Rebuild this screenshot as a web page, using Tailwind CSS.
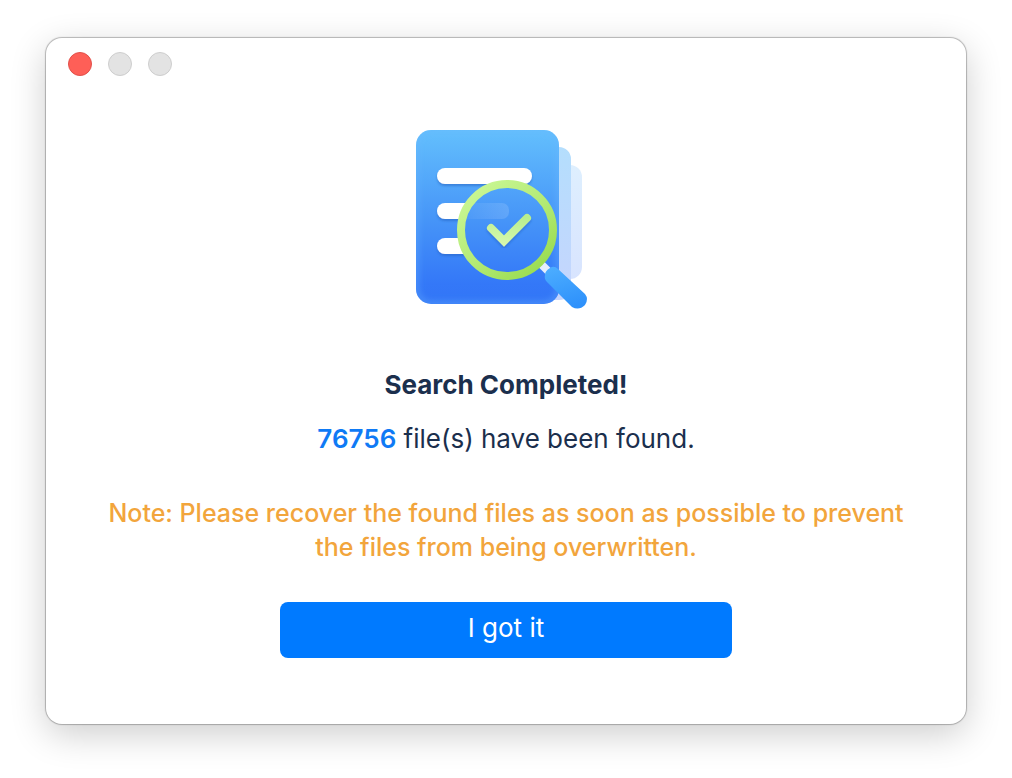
<!DOCTYPE html>
<html lang="en">
<head>
  <meta charset="UTF-8" />
  <meta name="viewport" content="width=device-width, initial-scale=1.0"/>
  <title>Search Completed</title>
  <script src="https://cdn.jsdelivr.net/npm/@tailwindcss/browser@4"></script>
</head>
<body class="bg-white px-[46px] pt-[38px] pb-[54px] font-['Inter',sans-serif] text-[26px] leading-[34px] text-[#1b2f4d]">
  <main class="rounded-2xl bg-white pb-[66px] shadow-[0_0_1px_1px_rgba(0,0,0,0.26),0_10px_36px_rgba(0,0,0,0.2)]">
    <!-- window buttons -->
    <div class="flex gap-4 px-[22px] pt-[14px]">
      <button type="button" aria-label="Close" class="size-6 rounded-full border border-[#e2504a] bg-[#fe5f57]"></button>
      <button type="button" aria-label="Minimize" disabled class="size-6 rounded-full border border-[#cecece] bg-[#e3e3e3]"></button>
      <button type="button" aria-label="Zoom" disabled class="size-6 rounded-full border border-[#cecece] bg-[#e3e3e3]"></button>
    </div>

    <div class="flex flex-col items-center px-12 pt-[39px] text-center">
      <svg class="h-[205px] w-[212px]" viewBox="0 0 212 205" fill="none" aria-hidden="true">
        <defs>
          <linearGradient id="page" x1="0" y1="15" x2="0" y2="189" gradientUnits="userSpaceOnUse">
            <stop offset="0" stop-color="#63bffd"/>
            <stop offset="0.5" stop-color="#4796f8"/>
            <stop offset="0.88" stop-color="#3478f8"/>
            <stop offset="1" stop-color="#3275f6"/>
          </linearGradient>
          <linearGradient id="back" x1="0" y1="32" x2="0" y2="184" gradientUnits="userSpaceOnUse">
            <stop offset="0" stop-color="#b4defd"/>
            <stop offset="1" stop-color="#c6d5fd"/>
          </linearGradient>
          <linearGradient id="rear" x1="0" y1="50" x2="0" y2="164" gradientUnits="userSpaceOnUse">
            <stop offset="0" stop-color="#deeffe"/>
            <stop offset="1" stop-color="#d8e4fe"/>
          </linearGradient>
          <linearGradient id="ring" x1="75" y1="75" x2="145" y2="155" gradientUnits="userSpaceOnUse">
            <stop offset="0" stop-color="#c8f692"/>
            <stop offset="0.5" stop-color="#b4eb76"/>
            <stop offset="1" stop-color="#99dc4f"/>
          </linearGradient>
          <linearGradient id="tick" x1="110" y1="100" x2="105" y2="130" gradientUnits="userSpaceOnUse">
            <stop offset="0" stop-color="#b8ee8e"/>
            <stop offset="1" stop-color="#d7f9ad"/>
          </linearGradient>
          <linearGradient id="handle" x1="160" y1="150" x2="172" y2="192" gradientUnits="userSpaceOnUse">
            <stop offset="0" stop-color="#4cadff"/>
            <stop offset="1" stop-color="#2e91fb"/>
          </linearGradient>
          <linearGradient id="ghost" x1="64" y1="0" x2="109" y2="0" gradientUnits="userSpaceOnUse">
            <stop offset="0" stop-color="#fff" stop-opacity="0.03"/>
            <stop offset="1" stop-color="#fff" stop-opacity="0.14"/>
          </linearGradient>
          <filter id="soft" x="-20%" y="-20%" width="140%" height="150%">
            <feDropShadow dx="0" dy="2" stdDeviation="1" flood-color="#1f5bbb" flood-opacity="0.5"/>
          </filter>
          <filter id="edge" x="-20%" y="-20%" width="140%" height="140%">
            <feGaussianBlur stdDeviation="3"/>
          </filter>
          <clipPath id="sheet"><rect x="16" y="15" width="143" height="174" rx="15"/></clipPath>
        </defs>
        <!-- stacked pages -->
        <path d="M150 50h20a12 12 0 0 1 12 12v90a12 12 0 0 1-12 12h-20z" fill="url(#rear)"/>
        <path d="M145 32h14a12 12 0 0 1 12 12v128a12 12 0 0 1-12 13h-14z" fill="url(#back)"/>
        <rect x="16" y="15" width="143" height="174" rx="15" fill="url(#page)"/>
        <g clip-path="url(#sheet)">
          <rect x="16" y="15" width="143" height="174" rx="15" stroke="#6db8ff" stroke-opacity="0.45" stroke-width="5" filter="url(#edge)"/>
        </g>
        <!-- text lines -->
        <g fill="#fff" filter="url(#soft)">
          <rect x="37" y="53" width="95" height="16" rx="8"/>
          <path d="M45 88h21l-6 16H45a8 8 0 0 1 0-16z"/>
          <path d="M45 123h15l6 16H45a8 8 0 0 1 0-16z"/>
        </g>
        <!-- magnifier -->
        <circle cx="107" cy="115" r="46" fill="url(#page)"/>
        <path d="M64 88h38a7 7 0 0 1 7 7v2a7 7 0 0 1-7 7H64z" fill="url(#ghost)"/>
        <path d="M141 149l8 8" stroke="#e6eefc" stroke-width="8"/>
        <circle cx="107" cy="115" r="46" stroke="url(#ring)" stroke-width="8"/>
        <path d="M91 113l13 13 23-23" stroke="url(#tick)" stroke-width="8" stroke-linecap="round" filter="url(#soft)"/>
        <path d="M145 160q0-4 5-7 4-3 8 1l27 25q4 5 0 11-6 6-13 2l-25-25q-3-3-2-7z" fill="url(#handle)"/>
      </svg>

      <h1 class="mt-[48px] font-bold">Search Completed!</h1>
      <p class="mt-5"><span class="font-semibold text-[#0f7af5]">76756</span> file(s) have been found.</p>
      <p class="mt-10 text-[25px] font-medium text-[#f2a53c]">Note: Please recover the found files as soon as possible to prevent the files from being overwritten.</p>
      <button type="button" class="mt-[38px] h-14 w-full max-w-[452px] rounded-lg bg-[#007aff] pb-1 text-white">I got it</button>
    </div>
  </main>
</body>
</html>
